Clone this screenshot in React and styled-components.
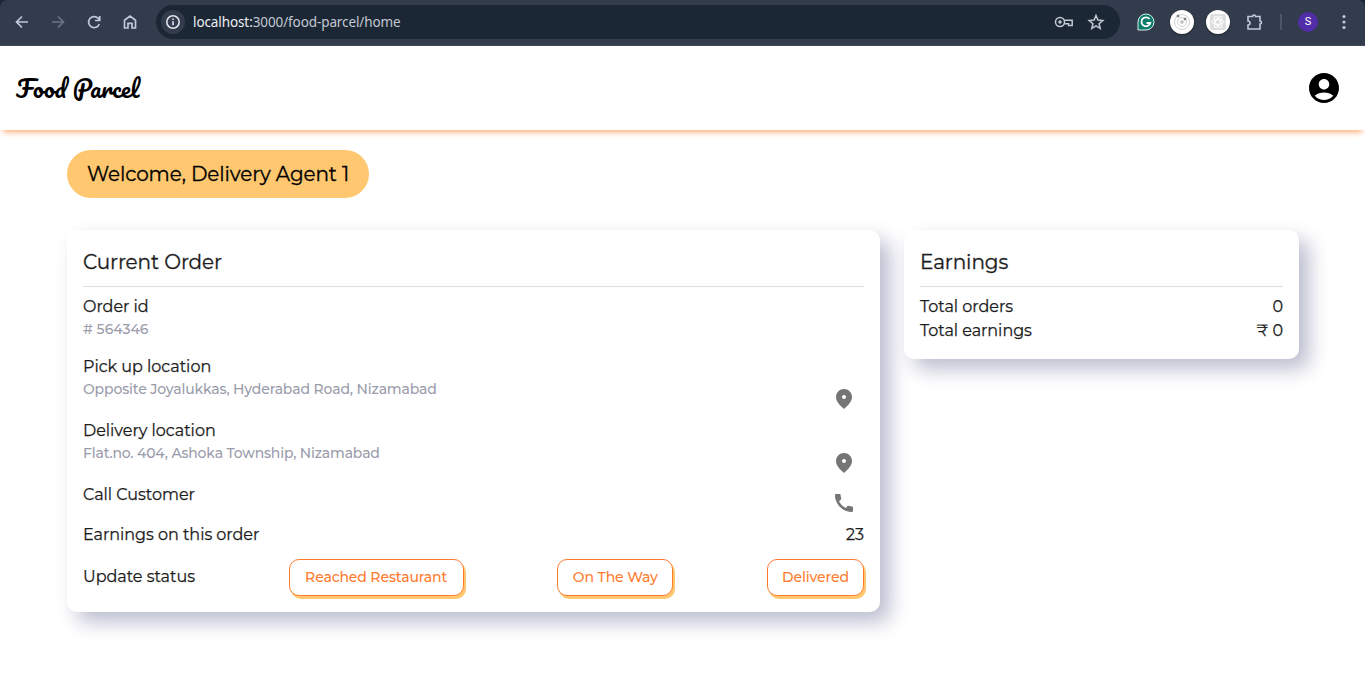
import React from "react";
import styled, { createGlobalStyle } from "styled-components";

const Global = createGlobalStyle`
  *{box-sizing:border-box}
  body{margin:0;background:#fff;font-family:"Montserrat","Inter",sans-serif;color:#1c1c1c}
  #root{min-height:100vh}
`;
const Chrome = styled.div`
  height:46px;background:#323c4c;display:flex;align-items:center;
  padding:0 12px 1px 13px;
  border-top-left-radius:8px;border-top-right-radius:8px;
  border-bottom:1px solid #434a55;
`;
const ChromeWrap = styled.div`background:#1c2736;`;
const NavIcons = styled.div`display:flex;flex:none;gap:18px;width:143px;color:#c0c9da;
  svg{width:18px;height:18px;fill:none;stroke:currentColor;stroke-width:1.7;display:block}
`;
const UrlBar = styled.div`
  width:964px;flex:none;height:34px;border-radius:17px;background:#1c2736;
  display:flex;align-items:center;padding:0 15px 0 5px;
`;
const InfoDot = styled.div`
  width:24px;height:24px;border-radius:50%;background:#323c4c;display:flex;align-items:center;justify-content:center;
`;
const Url = styled.div`
  flex:1;margin-left:8px;font:13.5px/20px "Noto Sans","Open Sans",sans-serif;color:#c3c8d1;letter-spacing:-0.1px;
  b{font-weight:400;color:#eef0f4}
`;
const UrlIcons = styled.div`display:flex;gap:13px;align-items:center;`;
const Extensions = styled.div`display:flex;align-items:center;margin-left:17px;flex:1;
  > svg{flex:none}
`;
const ExtensionPuzzle = styled.svg`margin-left:16px;`;
const MenuDots = styled.svg`margin-left:17px;`;
const Disc = styled.div`
  width:24px;height:24px;flex:none;border-radius:50%;background:#fff;margin-left:${p => p.$ml}px;
  display:flex;align-items:center;justify-content:center;box-shadow:0 1px 2px rgba(0,0,0,.4);
`;
const Separator = styled.div`width:2px;flex:none;height:16px;background:#4b5667;margin-left:16px;`;
const Avatar = styled.div`
  width:20px;height:20px;flex:none;border-radius:50%;background:#512da8;color:#fff;margin-left:16px;
  font:11px/20px Roboto,sans-serif;text-align:center;
`;
const Header = styled.header`
  height:84px;background:#fff;display:flex;align-items:center;justify-content:space-between;
  padding:0 23px 0 16px;box-shadow:0 5px 6px -3px #ffa870;
`;
const Logo = styled.div`
  font:400 24px/40px "Pacifico","Liberation Serif",cursive;color:#000;
`;
const Main = styled.main`padding:20px 66px 0 67px;`;
const Welcome = styled.div`
  width:302px;height:48px;border-radius:24px;background:#ffc870;color:#000;
  font-size:20px;line-height:48px;padding-left:20px;white-space:nowrap;
  letter-spacing:-0.12px;-webkit-text-stroke:0.3px currentColor;
`;
const Columns = styled.div`display:flex;gap:24px;align-items:flex-start;margin-top:32px;`;
const Card = styled.section`
  width:${p => p.$w}px;background:#fff;border-radius:10px;padding:16px;
  box-shadow:10px 10px 20px #bbbdcf;
`;
const Title = styled.h2`
  margin:0 0 8px;padding-bottom:8px;border-bottom:1px solid #e0e0e0;
  font-size:20px;font-weight:400;line-height:32px;letter-spacing:-0.08px;
  -webkit-text-stroke:0.3px currentColor;
`;
const Text = styled.div`
  font-size:16px;line-height:24px;letter-spacing:-0.03px;white-space:nowrap;
  -webkit-text-stroke:0.25px currentColor;
`;
const Sub = styled.div`font-size:14px;line-height:20px;font-weight:500;color:#9a9cab;letter-spacing:${p => p.$ls ?? -0.14}px;white-space:nowrap;`;
const Row = styled.div`display:flex;justify-content:space-between;align-items:flex-start;margin-bottom:${p => p.$mb || 0}px;`;
const IconButton = styled.div`
  width:40px;height:40px;padding:8px;color:#757575;
  svg{display:block;width:24px;height:24px;fill:currentColor}
`;
const StatusRow = styled.div`display:flex;justify-content:space-between;align-items:center;margin-top:12px;`;
const StatusLabel = styled(Text)`padding-bottom:2px;`;
const StatusButton = styled.button`
  width:${p => p.$w}px;height:37px;border:1px solid #ff7b2e;border-radius:10px;background:#fff;color:#ff7b2e;
  font:500 14px/20px "Montserrat","Inter",sans-serif;letter-spacing:-0.12px;padding:0 0 2px;
  box-shadow:2px 3px 0 #ffc870;white-space:nowrap;
`;
const Svg = ({ d, size = 24 }) => <svg viewBox="0 0 24 24" width={size} height={size}><path d={d} /></svg>;
const PIN = "M12 2c-4.2 0-8 3.22-8 8.2 0 3.32 2.67 7.25 8 11.8 5.33-4.55 8-8.48 8-11.8C20 5.22 16.2 2 12 2zm0 10c-1.1 0-2-.9-2-2s.9-2 2-2 2 .9 2 2-.9 2-2 2z";
const PHONE = "M20.01 15.38c-1.23 0-2.42-.2-3.53-.56-.35-.12-.74-.03-1.01.24l-1.57 1.97c-2.83-1.35-5.48-3.9-6.89-6.83l1.95-1.66c.27-.28.35-.67.24-1.02-.37-1.11-.56-2.3-.56-3.53 0-.54-.45-.99-.99-.99H4.19C3.65 3 3 3.24 3 3.99 3 13.28 10.73 21 20.01 21c.71 0 .99-.63.99-1.18v-3.45c0-.54-.45-.99-.99-.99z";
const ACCOUNT = "M12 2C6.48 2 2 6.48 2 12s4.48 10 10 10 10-4.48 10-10S17.52 2 12 2zm0 4c1.93 0 3.5 1.57 3.5 3.5S13.93 13 12 13s-3.5-1.57-3.5-3.5S10.07 6 12 6zm0 14c-2.03 0-4.43-.82-6.14-2.88C7.55 15.8 9.68 15 12 15s4.45.8 6.14 2.12C16.43 19.18 14.03 20 12 20z";

export default function App() {
  return (
    <>
      <Global />
      <ChromeWrap><Chrome>
        <NavIcons>
          <svg viewBox="0 0 18 18"><path d="M15 9H4M9 3.500 3.500 9 9 14.500" /></svg>
          <svg viewBox="0 0 18 18" opacity=".4"><path d="M3 9h11M9 3.500 14.500 9 9 14.500" /></svg>
          <svg viewBox="0 0 18 18"><path d="M14.300 11A5.500 5.500 0 1 1 13 5.200L14.500 7M14.700 3v4.500H10" /></svg>
          <svg viewBox="0 0 18 18"><path d="M3.500 15V7.200L9 3l5.500 4.200V15H11v-4.700H7V15z" /></svg>
        </NavIcons>
        <UrlBar>
          <InfoDot><svg width="16" height="16" viewBox="0 0 16 16" fill="none" stroke="#e0e3ea" strokeWidth="1.600"><circle cx="8" cy="8" r="6.200" /><path d="M8 7.300v4M8 4.500v1.600" /></svg></InfoDot>
          <Url><b>localhost:</b>3000/food-parcel/home</Url>
          <UrlIcons>
            <svg width="20" height="14" viewBox="0 0 20 14" fill="none" stroke="#c3c8d1" strokeWidth="1.500"><circle cx="6" cy="7" r="4.500" /><circle cx="6" cy="7" r="1" fill="#c3c8d1" /><path d="M10 5.300h8.200v5.300h-3.600V8.800H10" /></svg>
            <svg width="18" height="18" viewBox="0 0 18 18" fill="none" stroke="#c3c8d1" strokeWidth="1.500"><path d="m9 2.500 1.900 4.600 4.900.4-3.700 3.200 1.100 4.800L9 12.900l-4.200 2.600 1.100-4.800-3.700-3.200 4.900-.4z" /></svg>
          </UrlIcons>
        </UrlBar>
        <Extensions>
          <svg width="18" height="18" viewBox="0 0 18 18"><path d="M1 17V9a8 8 0 1 1 8 8z" fill="#0b7a68" stroke="#d9ece8" /><path d="M12.500 6A4.500 4.500 0 1 0 13.300 10H9.500" fill="none" stroke="#fff" strokeWidth="1.800" /></svg>
          <Disc $ml={15}><svg width="18" height="18" viewBox="0 0 18 18" fill="none" stroke="#d0d0d0"><circle cx="9" cy="9" r="7.500" /><circle cx="9" cy="9" r="4.500" /><circle cx="9" cy="9" r="1.500" fill="#bbb" /><circle cx="5" cy="3" r="1" fill="#777" stroke="#777" /><circle cx="12" cy="6" r="1" fill="#777" stroke="#777" /></svg></Disc>
          <Disc $ml={12}><svg width="16" height="16" viewBox="0 0 16 16" fill="none" stroke="#fff"><rect width="16" height="16" rx="2" fill="#dedede" stroke="none" /><ellipse cx="8" cy="8" rx="6" ry="2.400" /><ellipse cx="8" cy="8" rx="6" ry="2.400" transform="rotate(60 8 8)" /><ellipse cx="8" cy="8" rx="6" ry="2.400" transform="rotate(120 8 8)" /></svg></Disc>
          <ExtensionPuzzle width="18" height="18" viewBox="0 0 18 18" fill="none" stroke="#c0c9da" strokeWidth="1.600"><path d="M2 3.500h4.500a1.500 1.500 0 0 1 3 0H14V8a1.500 1.500 0 0 1 0 3v5H2v-4a2 2 0 0 0 0-4z" /></ExtensionPuzzle>
          <Separator />
          <Avatar>S</Avatar>
          <MenuDots width="18" height="18" viewBox="0 0 18 18" fill="#c0c9da"><circle cx="9" cy="3.500" r="1.600" /><circle cx="9" cy="9" r="1.600" /><circle cx="9" cy="14.500" r="1.600" /></MenuDots>
        </Extensions>
      </Chrome></ChromeWrap>
      <Header>
        <Logo>Food Parcel</Logo>
        <Svg d={ACCOUNT} size={36} />
      </Header>
      <Main>
        <Welcome>Welcome, Delivery Agent 1</Welcome>
        <Columns>
          <Card $w={813}>
            <Title>Current Order</Title>
            <Row $mb={16}><div><Text>Order id</Text><Sub $ls={0}># 564346</Sub></div></Row>
            <Text>Pick up location</Text>
            <Row><Sub>Opposite Joyalukkas, Hyderabad Road, Nizamabad</Sub><IconButton><Svg d={PIN} /></IconButton></Row>
            <Text>Delivery location</Text>
            <Row><Sub $ls={-0.17}>Flat.no. 404, Ashoka Township, Nizamabad</Sub><IconButton><Svg d={PIN} /></IconButton></Row>
            <Row><Text>Call Customer</Text><IconButton><Svg d={PHONE} /></IconButton></Row>
            <Row><Text>Earnings on this order</Text><Text>23</Text></Row>
            <StatusRow>
              <StatusLabel>Update status</StatusLabel>
              <StatusButton $w={175}>Reached Restaurant</StatusButton>
              <StatusButton $w={116}>On The Way</StatusButton>
              <StatusButton $w={97}>Delivered</StatusButton>
            </StatusRow>
          </Card>
          <Card $w={395}>
            <Title>Earnings</Title>
            <Row><Text>Total orders</Text><Text>0</Text></Row>
            <Row><Text>Total earnings</Text><Text>₹ 0</Text></Row>
          </Card>
        </Columns>
      </Main>
    </>
  );
}
